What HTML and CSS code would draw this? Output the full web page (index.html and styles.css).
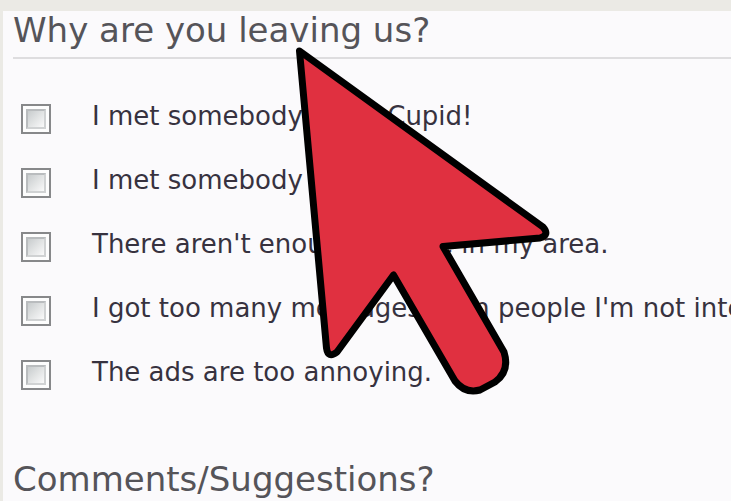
FILE: index.html
```html
<!DOCTYPE html>
<html lang="en">
<head>
<meta charset="utf-8">
<title>Why are you leaving us?</title>
<link rel="stylesheet" href="styles.css">
</head>
<body>
<main class="page">
  <form class="survey">
    <fieldset class="reasons">
      <legend class="heading">Why are you leaving us?</legend>
      <div class="options">
        <label class="option"><input class="box" type="checkbox"><span>I met somebody on OkCupid!</span></label>
        <label class="option"><input class="box" type="checkbox"><span>I met somebody elsewhere.</span></label>
        <label class="option"><input class="box" type="checkbox"><span>There aren't enough people in my area.</span></label>
        <label class="option"><input class="box" type="checkbox"><span>I got too many messages from people I'm not interested in.</span></label>
        <label class="option"><input class="box" type="checkbox"><span>The ads are too annoying.</span></label>
      </div>
    </fieldset>
    <h2 class="heading">Comments/Suggestions?</h2>
  </form>
</main>
<svg class="pointer" width="260" height="356" viewBox="292 42 260 356" aria-hidden="true">
  <path d="M299.500 51 L543 227 Q550 235 540 238 L443 246.500 L504 352 Q510 371 495 382 L480 390 Q465 394 455 381 L393.500 275 L337 352 Q328 359 326.500 348 Z"/>
</svg>
</body>
</html>
```
FILE: styles.css
```css
*,
*::before {
  box-sizing: border-box;
}

body {
  margin: 0;
  height: 100vh;
  overflow: hidden;
  background: #ebeae5;
  color: #37323f;
  font: 26px/32px Verdana, "DejaVu Sans", sans-serif;
}

.page {
  min-height: 100vh;
  margin: 11px 0 0 3px;
  padding-left: 10px;
  overflow: hidden;
  background: #fbfafc;
}

.reasons {
  min-width: 0;
  margin: 0;
  padding: 0;
  border: 0;
}

.heading {
  width: 100%;
  margin: 0;
  padding: 0;
  color: #555459;
  font-size: 34px;
  font-weight: 400;
  line-height: 38px;
  white-space: nowrap;
}

.reasons .heading {
  height: 48px;
  border-bottom: 2px solid #dedddf;
}

.options {
  display: grid;
  gap: 32px;
  padding: 41px 0 72px 8px;
}

.option {
  display: flex;
  align-items: center;
  gap: 41px;
  height: 32px;
  white-space: nowrap;
}

.box {
  appearance: none;
  flex: none;
  width: 30px;
  height: 30px;
  margin: 6px 0 0;
  padding: 3px;
  border: 2px solid #87888a;
  background: #fdfdfd;
}

.box::before {
  content: "";
  display: block;
  width: 20px;
  height: 20px;
  border: 2px solid #b9bcbe;
  border-right-color: #d0d2d3;
  border-bottom-color: #d0d2d3;
  background: linear-gradient(135deg, #c8cccd, #fafafa);
}

.box:checked::before {
  background: #555459;
}

.pointer {
  position: absolute;
  left: 292px;
  top: 42px;
  pointer-events: none;
}

.pointer path {
  fill: #e03040;
  stroke: #000;
  stroke-width: 7px;
  stroke-linejoin: round;
}
```
